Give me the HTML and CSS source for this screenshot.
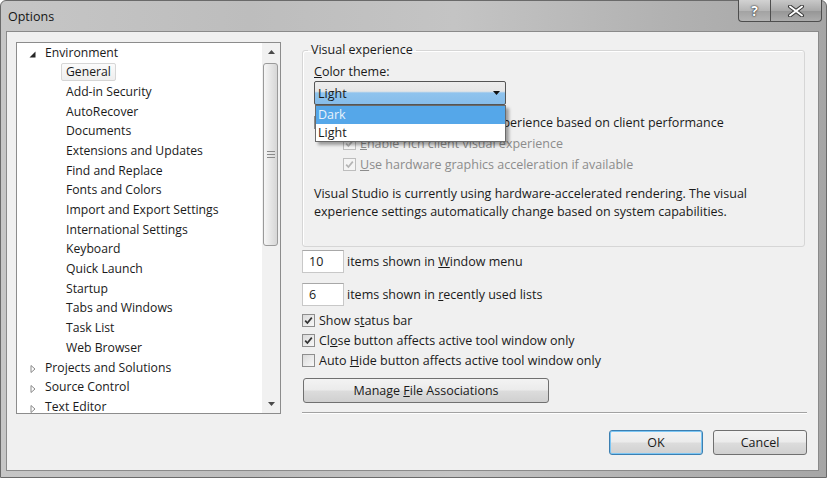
FILE: index.html
```html
<!DOCTYPE html>
<html lang="en">
<head>
<meta charset="utf-8">
<title>Options</title>
<link rel="stylesheet" href="styles.css">
</head>
<body>
<div class="window">
  <div class="titlebar">
    <span class="title">Options</span>
    <div class="caption-btns">
      <div class="cbtn help">?</div>
      <div class="cbtn close">
        <svg width="18" height="12" viewBox="0 0 18 12"><path d="M3 1.5 L15 10.5 M15 1.5 L3 10.5" stroke="#3a3a3a" stroke-width="4" stroke-linecap="round"/><path d="M3 1.5 L15 10.5 M15 1.5 L3 10.5" stroke="#ffffff" stroke-width="2" stroke-linecap="round"/></svg>
      </div>
    </div>
  </div>
  <div class="client">
    <div class="tree">
      <ul class="tree-list">
        <li class="node"><svg class="glyph" width="10" height="14" viewBox="0 0 10 14"><polygon points="7.5,5.5 7.5,11.5 1.5,11.5" fill="#262626"/></svg><span>Environment</span></li>
        <li class="child"><span class="sel">General</span></li>
        <li class="child"><span>Add-in Security</span></li>
        <li class="child"><span>AutoRecover</span></li>
        <li class="child"><span>Documents</span></li>
        <li class="child"><span>Extensions and Updates</span></li>
        <li class="child"><span>Find and Replace</span></li>
        <li class="child"><span>Fonts and Colors</span></li>
        <li class="child"><span>Import and Export Settings</span></li>
        <li class="child"><span>International Settings</span></li>
        <li class="child"><span>Keyboard</span></li>
        <li class="child"><span>Quick Launch</span></li>
        <li class="child"><span>Startup</span></li>
        <li class="child"><span>Tabs and Windows</span></li>
        <li class="child"><span>Task List</span></li>
        <li class="child"><span>Web Browser</span></li>
        <li class="node"><svg class="glyph" width="10" height="14" viewBox="0 0 10 14"><polygon points="3,5.5 3,12.5 7,9" fill="#ffffff" stroke="#8a8a8a" stroke-width="1"/></svg><span>Projects and Solutions</span></li>
        <li class="node"><svg class="glyph" width="10" height="14" viewBox="0 0 10 14"><polygon points="3,5.5 3,12.5 7,9" fill="#ffffff" stroke="#8a8a8a" stroke-width="1"/></svg><span>Source Control</span></li>
        <li class="node"><svg class="glyph" width="10" height="14" viewBox="0 0 10 14"><polygon points="3,5.5 3,12.5 7,9" fill="#ffffff" stroke="#8a8a8a" stroke-width="1"/></svg><span>Text Editor</span></li>
      </ul>
      <div class="vscroll">
        <div class="sb-arrow"><svg width="7" height="4" viewBox="0 0 7 4"><polygon points="0,4 7,4 3.5,0" fill="#4a4a4a"/></svg></div>
        <div class="sb-track">
          <div class="sb-thumb">
            <svg width="8" height="7" viewBox="0 0 8 7"><path d="M0 0.5H8M0 3.5H8M0 6.5H8" stroke="#8a8a8a" stroke-width="1"/></svg>
          </div>
        </div>
        <div class="sb-arrow"><svg width="7" height="4" viewBox="0 0 7 4"><polygon points="0,0 7,0 3.5,4" fill="#4a4a4a"/></svg></div>
      </div>
    </div>

    <div class="pane">
      <fieldset class="group">
        <legend>Visual experience</legend>
        <div class="label"><u>C</u>olor theme:</div>
        <div class="combo-wrap">
          <div class="combo">
            <span>Light</span>
            <svg width="7" height="4" viewBox="0 0 7 4"><polygon points="0,0 7,0 3.5,4" fill="#111"/></svg>
          </div>
          <ul class="combo-list">
            <li class="hl">Dark</li>
            <li>Light</li>
          </ul>
        </div>
        <div class="check-row top">
          <span class="cb"><svg width="11" height="11" viewBox="0 0 11 11"><path d="M2.2 5.6 L4.4 8 L8.8 2.6" fill="none" stroke="#333" stroke-width="1.7"/></svg></span>
          <span><u>A</u>utomatically adjust visual experience based on client performance</span>
        </div>
        <div class="check-row sub disabled">
          <span class="cb"><svg width="11" height="11" viewBox="0 0 11 11"><path d="M2.2 5.6 L4.4 8 L8.8 2.6" fill="none" stroke="#b4b4b4" stroke-width="1.7"/></svg></span>
          <span><u>E</u>nable rich client visual experience</span>
        </div>
        <div class="check-row sub disabled">
          <span class="cb"><svg width="11" height="11" viewBox="0 0 11 11"><path d="M2.2 5.6 L4.4 8 L8.8 2.6" fill="none" stroke="#b4b4b4" stroke-width="1.7"/></svg></span>
          <span><u>U</u>se hardware graphics acceleration if available</span>
        </div>
        <p class="info">Visual Studio is currently using hardware-accelerated rendering. The visual<br>experience settings automatically change based on system capabilities.</p>
      </fieldset>

      <div class="num-row first"><div class="textbox">10</div><span>items shown in <u>W</u>indow menu</span></div>
      <div class="num-row"><div class="textbox">6</div><span>items shown in <u>r</u>ecently used lists</span></div>

      <div class="checks">
        <div class="check-row">
          <span class="cb"><svg width="11" height="11" viewBox="0 0 11 11"><path d="M2.2 5.6 L4.4 8 L8.8 2.6" fill="none" stroke="#333" stroke-width="1.7"/></svg></span>
          <span>Show s<u>t</u>atus bar</span>
        </div>
        <div class="check-row">
          <span class="cb"><svg width="11" height="11" viewBox="0 0 11 11"><path d="M2.2 5.6 L4.4 8 L8.8 2.6" fill="none" stroke="#333" stroke-width="1.7"/></svg></span>
          <span>Cl<u>o</u>se button affects active tool window only</span>
        </div>
        <div class="check-row">
          <span class="cb"></span>
          <span>Auto <u>H</u>ide button affects active tool window only</span>
        </div>
      </div>

      <button class="btn manage">Manage <u>F</u>ile Associations</button>
      <div class="sep"></div>
      <div class="dlg-btns">
        <button class="btn ok">OK</button>
        <button class="btn">Cancel</button>
      </div>
    </div>
  </div>
</div>
</body>
</html>
```

FILE: styles.css
```css
html, body {
  margin: 0;
  padding: 0;
}
body {
  font-family: "Open Sans", "Noto Sans", sans-serif;
  font-size: 12px;
  color: #1a1a1a;
  background: #ffffff;
}
.window {
  width: 827px;
  height: 478px;
  box-sizing: border-box;
  display: flex;
  flex-direction: column;
  background: linear-gradient(to right, #c6c6c6 0%, #bdbdbd 30%, #c4c4c4 55%, #b2b2b2 80%, #a6a6a6 100%);
  border: 1px solid #6a6a6a;
  border-radius: 6px 6px 0 0;
}
.titlebar {
  height: 30px;
  display: flex;
  align-items: center;
  flex: none;
}
.title {
  padding-left: 7px;
  font-size: 12.5px;
  color: #151515;
}
.caption-btns {
  margin-left: auto;
  margin-right: 4px;
  align-self: flex-start;
  display: flex;
  margin-top: -1px;
}
.cbtn {
  height: 22px;
  box-sizing: border-box;
  border: 1px solid #4e4e4e;
  border-top: none;
  display: flex;
  align-items: center;
  justify-content: center;
  background: linear-gradient(#d2d2d2, #b6b6b6 50%, #a2a2a2 51%, #b4b4b4);
}
.help {
  width: 32px;
  border-radius: 0 0 0 4px;
  border-right: none;
  font-weight: bold;
  font-size: 14px;
  color: #ffffff;
  text-shadow: 0 0 2px #222, 0 0 1px #222;
}
.close {
  width: 52px;
  border-radius: 0 0 4px 0;
  background: linear-gradient(#c8c8c8, #a9a9a9 50%, #959595 51%, #acacac);
}
.client {
  margin: 0 7px 0 5px;
  height: 440px;
  box-sizing: border-box;
  border: 1px solid #8a8a8a;
  background: #f0f0f0;
  display: flex;
  align-items: flex-start;
  gap: 21px;
  padding: 10px 0 0 9px;
}

/* tree */
.tree {
  width: 265px;
  height: 372px;
  box-sizing: border-box;
  border: 1px solid #8c8c8c;
  background: #ffffff;
  display: flex;
  flex: none;
  font-size: 12.2px;
}
.tree-list {
  list-style: none;
  margin: 0;
  padding: 0;
  flex: 1;
  overflow: hidden;
}
.tree-list li {
  height: 19.67px;
  display: flex;
  align-items: center;
  white-space: nowrap;
}
.tree-list .node {
  padding-left: 11px;
}
.tree-list .node .glyph {
  margin-right: 7px;
  flex: none;
}
.tree-list .child {
  padding-left: 44px;
}
.tree-list .child span {
  padding: 0 4px;
  border: 1px solid transparent;
  line-height: 16px;
}
.tree-list .child .sel {
  border-color: #d6d6d6;
  border-radius: 2px;
  background: linear-gradient(#fbfbfb, #eeeeee);
}
.vscroll {
  width: 18px;
  flex: none;
  display: flex;
  flex-direction: column;
  background: #f1f1f1;
}
.sb-arrow {
  height: 18px;
  display: flex;
  align-items: center;
  justify-content: center;
  flex: none;
}
.sb-track {
  flex: 1;
  padding-top: 2px;
}
.sb-thumb {
  width: 15px;
  height: 183px;
  margin-left: 1px;
  box-sizing: border-box;
  border: 1px solid #9a9a9a;
  border-radius: 3px;
  background: linear-gradient(to right, #f6f6f6, #e6e6e6 50%, #d6d6d6);
  display: flex;
  align-items: center;
  justify-content: center;
}

/* right pane */
.pane {
  width: 505px;
  flex: none;
  display: flex;
  flex-direction: column;
  font-size: 12.5px;
}
.group {
  margin: 0 2px 0 0;
  padding: 0 0 25px 11px;
  border: 1px solid #d6d6d6;
  border-radius: 3px;
  box-shadow: inset 1px 1px 0 #ffffff;
  min-width: 0;
}
.group legend {
  margin-left: -6px;
  padding: 0 3px;
  line-height: 16px;
}
.label {
  margin-top: 6px;
  line-height: 16px;
}
.combo-wrap {
  position: relative;
  width: 192px;
  margin-top: 1px;
}
.combo {
  height: 24px;
  box-sizing: border-box;
  border: 1px solid #555555;
  border-radius: 2px;
  background: linear-gradient(#ededed 0%, #e6e6e6 42%, #8fc3ee 50%, #86bdea 100%);
  display: flex;
  align-items: center;
  padding: 0 5px 0 3px;
}
.combo span {
  flex: 1;
}
.combo-list {
  position: absolute;
  left: 1px;
  top: 24px;
  width: 191px;
  box-sizing: border-box;
  margin: 0;
  padding: 0;
  list-style: none;
  background: #ffffff;
  border: 1px solid #6a6a6a;
  box-shadow: 3px 3px 3px rgba(0, 0, 0, 0.35);
  z-index: 2;
}
.combo-list li {
  height: 17.5px;
  line-height: 17.5px;
  padding-left: 2px;
}
.combo-list .hl {
  background: #55a7e9;
  color: #e8f2fb;
}
.check-row {
  height: 21px;
  display: flex;
  align-items: center;
  gap: 4px;
  white-space: nowrap;
}
.check-row.top {
  margin-top: 6.5px;
}
.check-row.sub {
  margin-left: 29px;
}
.check-row.disabled {
  color: #8c8c8c;
}
.cb {
  width: 13px;
  height: 13px;
  box-sizing: border-box;
  border: 1px solid #8e8e8e;
  background: linear-gradient(135deg, #dadada, #f8f8f8);
  display: flex;
  align-items: center;
  justify-content: center;
  flex: none;
}
.check-row.disabled .cb {
  border-color: #bdbdbd;
  background: #f4f4f4;
}
.info {
  margin: 10px 0 0;
  line-height: 18px;
}
.num-row {
  display: flex;
  align-items: center;
  gap: 3px;
  margin-top: 10px;
}
.num-row.first {
  margin-top: 3px;
}
.textbox {
  width: 42px;
  height: 23px;
  box-sizing: border-box;
  border: 1px solid #c8c8c8;
  border-top-color: #a8a8a8;
  background: #ffffff;
  padding-left: 6px;
  line-height: 21px;
}
.checks {
  margin-top: 5px;
}
.checks .check-row {
  height: 20px;
}
.btn {
  font: inherit;
  color: #1a1a1a;
  height: 25px;
  box-sizing: border-box;
  border: 1px solid #707070;
  border-radius: 3px;
  background: linear-gradient(#f3f3f3 0%, #ebebeb 48%, #dcdcdc 52%, #d0d0d0 100%);
  padding: 0;
}
.manage {
  width: 246px;
  margin: 7px 0 0 1px;
}
.sep {
  margin-top: 9px;
  height: 0;
  border-top: 1px solid #a2a2a2;
  border-bottom: 1px solid #ffffff;
}
.dlg-btns {
  margin-top: 16px;
  display: flex;
  justify-content: flex-end;
  gap: 10px;
}
.dlg-btns .btn {
  width: 94px;
}
.dlg-btns .ok {
  border-color: #3c7fb1;
  box-shadow: inset 0 0 0 1px #7cc6f4;
}
```
